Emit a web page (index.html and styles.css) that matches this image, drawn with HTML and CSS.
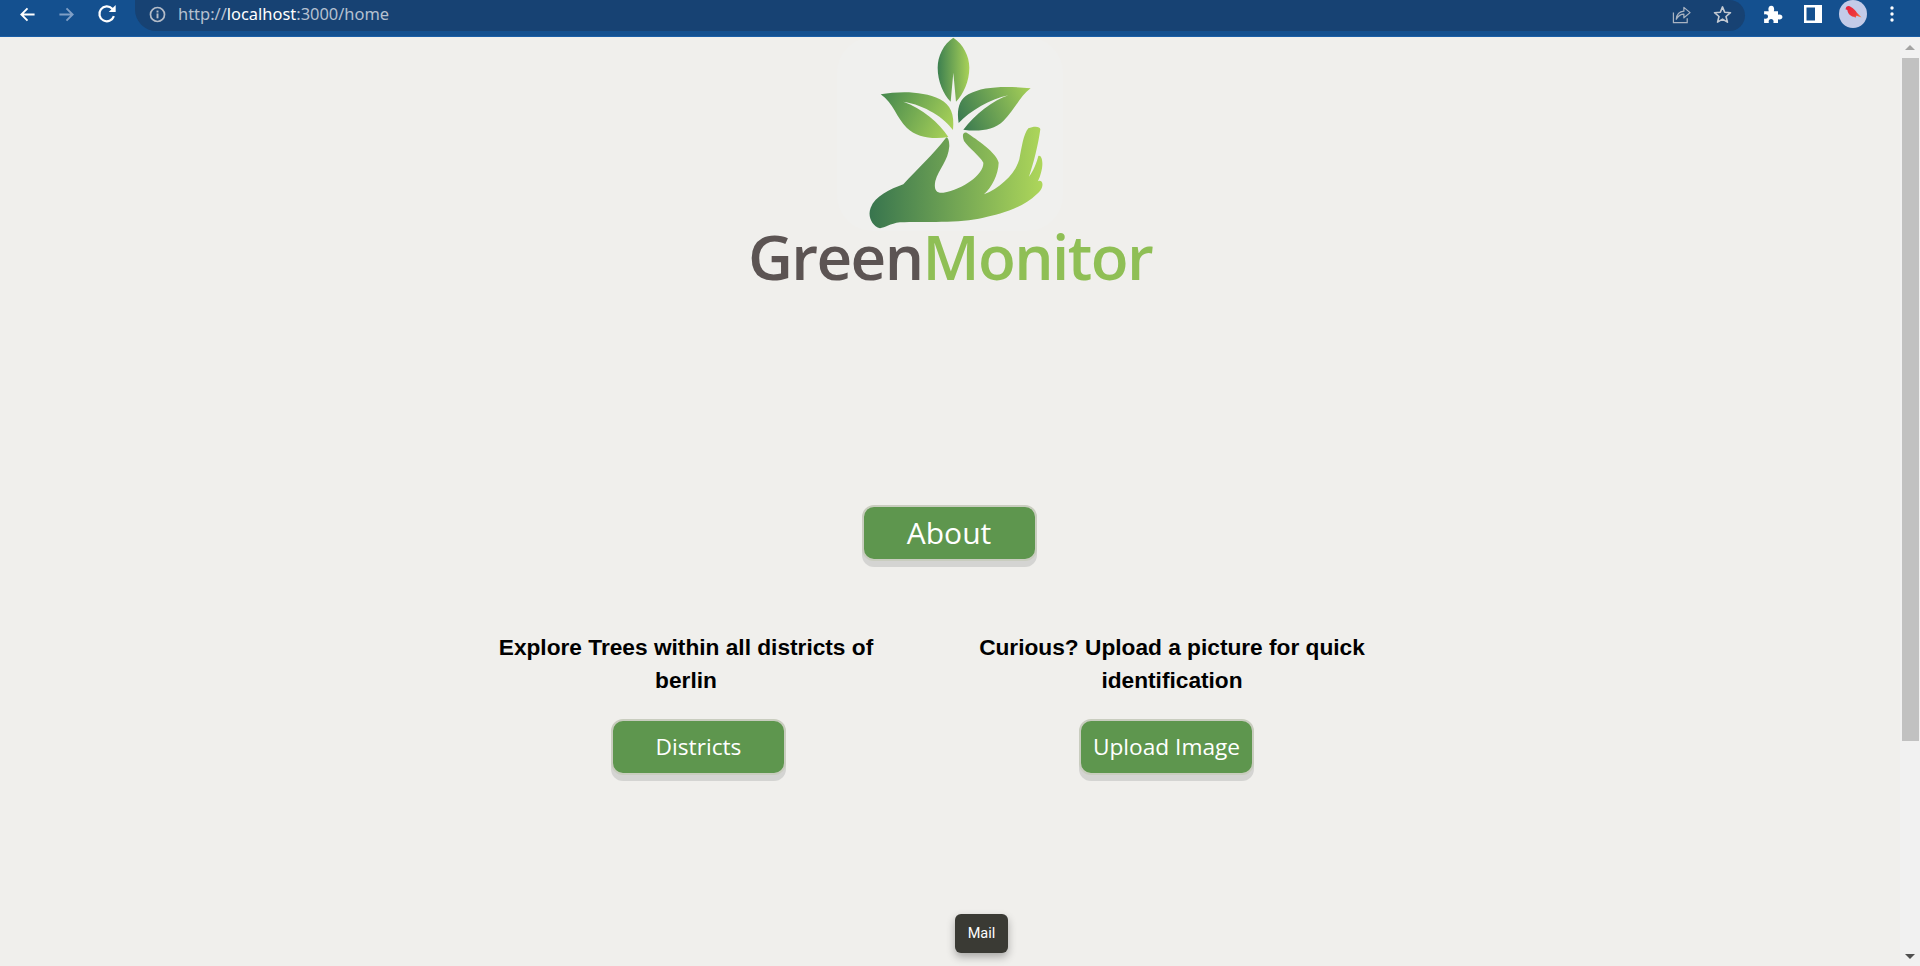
FILE: index.html
```html
<!DOCTYPE html>
<html lang="en">
<head>
<meta charset="utf-8">
<title>GreenMonitor</title>
<link rel="stylesheet" href="styles.css">
</head>
<body>
<header class="toolbar">
  <nav class="nav-icons">
    <svg class="nav-icon" viewBox="0 0 18 18"><path d="M16.500 9H2.500M9 2.500L2.500 9L9 15.500" fill="none" stroke="#fff" stroke-width="2"/></svg>
    <svg class="nav-icon faded" viewBox="0 0 18 18"><path d="M1.500 9H15.500M9 2.500L15.500 9L9 15.500" fill="none" stroke="#7f9fc6" stroke-width="2"/></svg>
    <svg class="nav-icon reload" viewBox="0 0 18 18"><path d="M15.200 11A6.700 6.700 0 1 1 13.700 4.200L15.200 5.800" fill="none" stroke="#fff" stroke-width="2"/><path d="M16.800 1V7.200H10.600Z" fill="#fff"/></svg>
  </nav>
  <div class="omnibox">
    <svg class="info" viewBox="0 0 16 16"><circle cx="8" cy="8" r="6.600" fill="none" stroke="#b4bcc8" stroke-width="1.600"/><rect x="7.100" y="7" width="1.800" height="4.600" fill="#b4bcc8"/><rect x="7.100" y="4.300" width="1.800" height="1.800" fill="#b4bcc8"/></svg>
    <div class="url">http://<span class="host">localhost</span>:3000/home</div>
    <div class="omni-actions">
      <svg class="omni-icon" viewBox="0 0 20 20"><path d="M1.500 8V18.500H16V14" fill="none" stroke="#aab4c2" stroke-width="1.300"/><path d="M4.500 15C5 10 8 6.800 12.500 6.500V2.500L19 8L12.500 13.500V9.600C9 9.600 6.500 11.500 4.500 15Z" fill="none" stroke="#aab4c2" stroke-width="1.300" stroke-linejoin="round"/></svg>
      <svg class="omni-icon" viewBox="0 0 20 20"><path d="M10 2L12.300 7.600L18.400 8.100L13.700 12.100L15.200 18L10 14.900L4.800 18L6.300 12.100L1.600 8.100L7.700 7.600Z" fill="none" stroke="#c4cad2" stroke-width="1.700" stroke-linejoin="round"/></svg>
    </div>
  </div>
  <div class="ext-icons">
    <svg class="ext-icon puzzle" viewBox="0 0 18 18"><path d="M1 6.500H5.200C4.400 4.500 4.800 1.500 7.500 1.500C10 1.500 10.500 4.500 9.700 6.500H13.500V9.700C15.500 8.900 17.500 9.800 17.500 11.700C17.500 13.600 15.500 14.500 13.500 13.700V17H9.300C10 15 9 13.500 7.300 13.500C5.500 13.500 4.700 15 5.300 17H1V13C3 13.700 4.500 12.800 4.500 11.200C4.500 9.600 3 8.800 1 9.500Z" fill="#fff"/></svg>
    <svg class="ext-icon" viewBox="0 0 18 18"><path fill-rule="evenodd" d="M0 0H18V18H0ZM2.500 2.500V15.500H11V2.500Z" fill="#fff"/></svg>
    <div class="avatar">
      <svg class="bird" viewBox="0 0 20 16">
        <defs><linearGradient id="g-bird" x1="2" y1="2" x2="19" y2="14" gradientUnits="userSpaceOnUse"><stop offset="0" stop-color="#e8243c"/><stop offset="0.650" stop-color="#ee3a3c"/><stop offset="1" stop-color="#f7843a"/></linearGradient></defs>
        <path d="M1 3.500C1.500 0.800 5 0.300 7 2.200C9.500 3.800 12.500 6 14 9L19.500 14.500L13.500 12.500L12 15L11 13.500C7 13.500 3 9.500 2.800 5.500L0.500 4.800Z" fill="url(#g-bird)"/>
      </svg>
    </div>
    <svg class="menu-dots" viewBox="0 0 4 16"><circle cx="2" cy="2" r="1.700" fill="#fff"/><circle cx="2" cy="8" r="1.700" fill="#fff"/><circle cx="2" cy="14" r="1.700" fill="#fff"/></svg>
  </div>
</header>

<div class="viewport">
  <main class="page">
    <div class="logo-mark">
      <svg class="logo-svg" viewBox="0 18 600 582">
        <defs>
          <linearGradient id="g-top" x1="233" y1="0" x2="328" y2="0" gradientUnits="userSpaceOnUse"><stop offset="0" stop-color="#3d8050"/><stop offset="1" stop-color="#a9d258"/></linearGradient>
          <linearGradient id="g-left" x1="80" y1="190" x2="280" y2="290" gradientUnits="userSpaceOnUse"><stop offset="0" stop-color="#4b8c4e"/><stop offset="1" stop-color="#a9d258"/></linearGradient>
          <linearGradient id="g-right" x1="296" y1="280" x2="510" y2="180" gradientUnits="userSpaceOnUse"><stop offset="0" stop-color="#377850"/><stop offset="1" stop-color="#a4ce57"/></linearGradient>
          <linearGradient id="g-hand" x1="30" y1="0" x2="545" y2="0" gradientUnits="userSpaceOnUse"><stop offset="0" stop-color="#38754e"/><stop offset="1" stop-color="#add65a"/></linearGradient>
        </defs>
        <path fill="url(#g-top)" d="M280 20C250 40 233 75 233 110C233 150 250 190 272 212L280 125L288 212C310 190 328 150 328 110C328 75 310 40 280 20Z"/>
        <path fill="url(#g-left)" d="M62 190C120 180 190 180 240 205C272 222 284 250 279 297C255 262 195 222 130 212C185 232 238 275 265 318C220 325 170 320 140 290C110 262 100 215 62 190Z"/>
        <path fill="url(#g-right)" d="M512 172C440 165 370 165 325 190C295 207 290 240 296 276C330 240 390 205 445 193C400 208 345 250 310 296C350 302 400 300 430 270C465 235 480 195 512 172Z"/>
        <path fill="url(#g-hand)" d="M258 320C220 370 170 415 130 460C90 475 45 495 32 530C22 555 35 585 60 592C75 590 90 578 120 574C190 570 300 578 370 560C420 550 490 530 530 490C555 470 550 445 535 450C520 460 500 485 485 503C510 485 535 460 543 425C552 395 545 370 535 375C530 395 520 420 507 437C520 400 535 340 541 295C541 285 520 285 505 292C490 310 485 350 478 385C465 430 420 470 372 490C395 470 415 430 416 395C410 365 350 325 320 305C308 302 306 315 312 330C325 350 360 375 370 395C372 430 310 475 250 485C225 488 222 470 226 450C235 415 265 390 268 345C268 325 262 318 258 320Z"/>
      </svg>
    </div>
    <div class="wordmark"><span class="word-dark">Green</span><span class="word-light">Monitor</span></div>

    <button class="btn btn-about">About</button>

    <section class="columns">
      <div class="column">
        <h2 class="col-title">Explore Trees within all districts of berlin</h2>
        <button class="btn btn-col btn-left">Districts</button>
      </div>
      <div class="column">
        <h2 class="col-title">Curious? Upload a picture for quick identification</h2>
        <button class="btn btn-col btn-right">Upload Image</button>
      </div>
    </section>

    <button class="mail">Mail</button>
  </main>
  <aside class="scrollbar">
    <div class="arrow-up"></div>
    <div class="thumb"></div>
    <div class="arrow-down"></div>
  </aside>
</div>
</body>
</html>
```
FILE: styles.css
```css
* { box-sizing: border-box; }
html, body { margin: 0; height: 100%; overflow: hidden; }
body { background: #f0efec; font-family: "Open Sans", sans-serif; display: flex; flex-direction: column; }

.toolbar { height: 37px; flex: none; background: #14508f; border-bottom: 1px solid #1a5ea6; padding-bottom: 5px; display: flex; align-items: stretch; }
.nav-icons { width: 135px; flex: none; display: flex; align-items: center; padding: 0 0 3px 19px; gap: 22px; }
.nav-icon { width: 17px; height: 17px; display: block; }
.reload { width: 20px; height: 20px; }
.omnibox { width: 1610px; flex: none; background: #174273; border-radius: 0 16px 16px 22px; display: flex; align-items: center; padding: 0 0 3px 14px; color: #b5c0d0; }
.info { width: 17px; height: 17px; }
.url { margin-left: 12px; font-size: 16.450px; font-family: "Noto Sans", sans-serif; line-height: 20px; }
.host { color: #fff; }
.omni-actions { margin-left: auto; display: flex; gap: 22px; padding-right: 13px; }
.omni-icon { width: 19px; height: 19px; display: block; }
.ext-icons { flex: 1; display: flex; align-items: center; padding: 0 0 3px 18px; }
.ext-icon { width: 18px; height: 18px; margin-right: 22px; display: block; }
.puzzle { width: 20px; height: 20px; margin-right: 21px; }
.avatar { width: 28px; height: 28px; border-radius: 50%; background: #c3cbe8; margin-left: -5px; display: flex; align-items: center; justify-content: center; }
.bird { width: 17px; height: 14px; margin-top: -4px; }
.menu-dots { width: 4px; height: 16px; margin-left: 23px; }

.viewport { flex: 1; display: flex; min-height: 0; overflow: hidden; }
.page { flex: 1; display: flex; flex-direction: column; align-items: center; min-width: 0; }
.scrollbar { width: 20px; flex: none; background: #f1f1f1; display: flex; flex-direction: column; align-items: center; }
.arrow-up { width: 0; height: 0; margin-top: 8px; border-left: 5px solid transparent; border-right: 5px solid transparent; border-bottom: 5px solid #a3a3a3; }
.thumb { width: 17px; height: 683px; margin-top: 8px; background: #c1c1c1; }
.arrow-down { width: 0; height: 0; margin-top: auto; margin-bottom: 7px; border-left: 5px solid transparent; border-right: 5px solid transparent; border-top: 5px solid #505050; }

.logo-mark { width: 226px; height: 194px; flex: none; background: #f0f0ee; border-radius: 36px; display: flex; justify-content: flex-end; padding-right: 3px; }
.logo-svg { width: 200px; height: 194px; display: block; }
.wordmark { font-size: 62px; font-weight: 600; line-height: 70px; margin-top: -10px; letter-spacing: -1.6px; }
.word-dark { color: #5c5453; }
.word-light { color: #8fbf55; }

.btn { display: block; width: 175px; height: 56px; border: 2px solid #c9cdbf; border-radius: 12px; background: #5e964e; color: #fff; font-family: "Open Sans", sans-serif; box-shadow: 0 6px 0 #d4d4d2; padding: 0 0 2px; }
.btn-about { font-size: 30px; margin-top: 214px; margin-right: 2px; }

.columns { display: flex; gap: 66px; margin-top: 70px; margin-right: 42px; }
.column { width: 420px; display: flex; flex-direction: column; align-items: center; }
.col-title { margin: 0; font-family: "Liberation Sans", Arial, sans-serif; font-weight: 700; font-size: 22.700px; line-height: 33px; color: #000; text-align: center; width: 100%; padding: 0 16px; }
.btn-col { font-size: 22.700px; margin-top: 22px; }
.btn-left { margin-left: 25px; }
.btn-right { margin-right: 11px; }

.mail { margin-top: 139px; margin-left: 63px; width: 53px; height: 39px; border: 0; border-radius: 6px; background: #3a3a34; color: #fff; font-family: "Roboto", sans-serif; font-size: 14.500px; box-shadow: 0 4px 8px rgba(0,0,0,.3); padding: 0; }
```
